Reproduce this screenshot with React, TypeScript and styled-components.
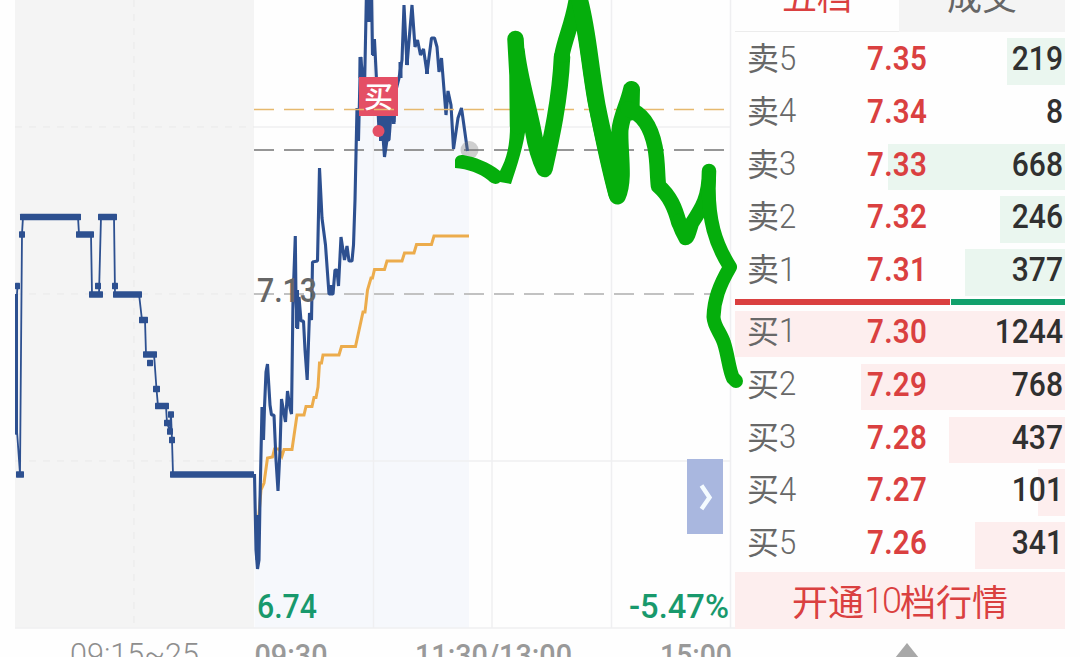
import React from 'react';
import styled, { createGlobalStyle } from 'styled-components';

const CJK = "'Noto Sans CJK SC', sans-serif";
const DIGITS = "Roboto, 'Noto Sans CJK SC', sans-serif";

const GlobalStyle = createGlobalStyle`
  * {
    box-sizing: border-box;
  }

  body {
    margin: 0;
    background: #fefefe;
    overflow: hidden;
  }
`;

const Screen = styled.main`
  position: relative;
  display: flex;
  width: 1080px;
  height: 657px;
  overflow: hidden;
  background: #fefefe;
`;

const ChartColumn = styled.section`
  flex: none;
  width: 735px;
  height: 657px;

  svg {
    display: block;
  }
`;

const OrderBook = styled.section`
  flex: none;
  display: flex;
  flex-direction: column;
  width: 330px;
  height: 657px;
`;

const Tabs = styled.div`
  flex: none;
  display: flex;
  height: 32px;
  margin-bottom: 3px;
`;

const Tab = styled.button<{ $active?: boolean }>`
  flex: none;
  display: flex;
  align-items: flex-end;
  justify-content: center;
  width: ${({ $active }) => ($active ? '164px' : '166px')};
  height: 32px;
  padding: 0 0 4px;
  border: none;
  border-bottom: 1px solid ${({ $active }) => ($active ? '#ececec' : '#f4f4f4')};
  background: ${({ $active }) => ($active ? 'transparent' : '#f4f4f4')};
  color: ${({ $active }) => ($active ? '#da4040' : '#666')};
  font-family: ${CJK};
  font-size: 35px;
  font-weight: 400;
  line-height: 64px;
`;

const Levels = styled.div`
  flex: none;
  display: flex;
  flex-direction: column;
`;

const LevelRow = styled.div`
  display: grid;
  height: 52.8px;
  padding: 3px 0;
`;

const DepthBar = styled.div<{ $side: Side }>`
  grid-area: 1 / 1;
  justify-self: end;
  height: 46.5px;
  background: ${({ $side }) => ($side === 'sell' ? '#eaf6ef' : '#fdeeee')};
`;

const LevelCells = styled.div`
  grid-area: 1 / 1;
  display: grid;
  grid-template-columns: 132px 80px 1fr;
  align-items: center;
  height: 42px;
  padding: 0 2px 0 12px;
  font-family: ${DIGITS};
  line-height: 40px;
`;

const LevelName = styled.span`
  display: flex;
  align-items: center;
  margin-top: -6px;
  color: #686868;
  font-family: ${CJK};
  font-size: 32px;
  font-weight: 400;
`;

const LevelIndex = styled.span`
  padding-top: 5px;
  font-family: ${DIGITS};
  font-size: 33px;
  font-weight: 350;
  transform: scaleX(0.94);
  transform-origin: left center;
`;

const Price = styled.span`
  margin-left: -12px;
  color: #da4040;
  font-size: 33px;
  font-weight: 600;
  letter-spacing: 0.3px;
  transform: scaleX(0.895);
  transform-origin: left center;
`;

const Volume = styled.span`
  color: #303030;
  font-size: 33px;
  font-weight: 500;
  text-align: right;
  transform: scaleX(0.91);
  transform-origin: right center;
`;

const RatioBar = styled.div`
  flex: none;
  display: grid;
  grid-template-columns: 215px 114px;
  gap: 1px;
  height: 6px;
  margin-bottom: 3px;
`;

const RatioPart = styled.div<{ $side: Side }>`
  background: ${({ $side }) => ($side === 'sell' ? '#12a06c' : '#da4040')};
`;

const UnlockButton = styled.button`
  flex: none;
  display: flex;
  align-items: center;
  justify-content: center;
  height: 57px;
  padding: 0;
  border: none;
  background: #fdeeee;
  color: #da4040;
  font-family: ${CJK};
  font-size: 36px;
  font-weight: 400;
  line-height: 57px;

  span {
    padding-top: 3px;
    font-family: ${DIGITS};
    font-weight: 350;
    letter-spacing: -2px;
  }
`;

const Footer = styled.div`
  display: flex;
  justify-content: center;
  padding: 14px 0 0 14px;
`;

const Doodle = styled.svg`
  position: absolute;
  inset: 0;
  pointer-events: none;
`;

type Side = 'sell' | 'buy';

interface Level {
  name: string;
  index: number;
  price: string;
  volume: number;
}

const SELL_LEVELS: Level[] = [
  { name: '卖', index: 5, price: '7.35', volume: 219 },
  { name: '卖', index: 4, price: '7.34', volume: 8 },
  { name: '卖', index: 3, price: '7.33', volume: 668 },
  { name: '卖', index: 2, price: '7.32', volume: 246 },
  { name: '卖', index: 1, price: '7.31', volume: 377 },
];

const BUY_LEVELS: Level[] = [
  { name: '买', index: 1, price: '7.30', volume: 1244 },
  { name: '买', index: 2, price: '7.29', volume: 768 },
  { name: '买', index: 3, price: '7.28', volume: 437 },
  { name: '买', index: 4, price: '7.27', volume: 101 },
  { name: '买', index: 5, price: '7.26', volume: 341 },
];

const MAX_VOLUME = 1244;

const AUCTION_LINE =
  '17.5,286 17,294 17,431 20,474 22,234 23,217 78,217 79,234 91,234 92,294 99,294 101,217 114,217 115,294 139,294 142,320 145,320 146,354 154,354 156.5,389 158,406 166,406 167,423 170,431 171,414 172,440 173,474 254,474';

// [x1, x2, y] of every auction price block
const AUCTION_BLOCKS = [
  [15, 20, 286], [15, 18, 431.5], [16, 24, 474.5], [19, 25, 234.5], [20, 81, 217],
  [76, 94, 234.5], [89, 103, 294.5], [95, 101, 286], [98, 117, 217], [112, 118, 286],
  [113, 142, 294.5], [139, 148, 320], [143, 157, 354.5], [147, 153, 363], [153, 160, 389],
  [155, 169, 406], [168, 174, 414.5], [164, 170, 423], [167, 173, 431.5], [169, 175, 440],
  [170, 254, 474.5],
];

const PRICE_LINE =
  '254.5,474 256,550 257.5,569 259,560 260,500 262,407 263.5,440 264.5,407 266,372 267.5,364 270,405 271.5,415 274,415 276,460 278,491 280,450 281.5,399 285.5,422 287.5,391 290,408 291.5,414 293,300 295.3,236 296,300 297.6,329 299,297 301,321 303.5,321 305,350 307.2,380 309.5,313 311.5,320 312.5,262 317.5,261 319.5,168 322,218 325.5,245 329,294 333,294 335,270 337,270 338.5,286 341,237 344.5,260 347,246 349,261 352,261 353.5,245 355,200 357,108 358.5,140 360.5,57 364.5,90 366.5,-10 368.8,21 371.5,-10 372.5,55 374.5,40 377,90 379,130 381,110 384.5,157 387,140 389,140 392,100 394,122 396,90 399,78 402,60 404,5 407,65 412,5 415,47 417.5,40 420.5,55 423.5,49 427,73 431.5,38 434.5,38 437,47 439,72 441.5,58 446,115 448,91 451,105 453.5,149 458,118 461.5,108 467.5,151';

const AVERAGE_LINE =
  '257,524 259,514 261,490 264,483 267.5,458 272.5,457 274.5,449 279,449 282,456 284,449.5 292,449.5 297,415 304,415 306,406.5 312,406.5 314,397.5 316,397.5 318,387 319.5,363 321.5,363 323,355 339,355 341.5,346.5 355.5,346.5 363,312 365,312 367.5,290 371,278 372.5,278 374.5,269.5 384.5,269.5 387,261 402,261 404.5,253 414,253 416.5,244.5 431.5,244.5 434,236 469,236';

const SketchStroke = () => (
  <Doodle width="1080" height="657" viewBox="0 0 1080 657" fill="none" stroke="#05ae0c" strokeLinecap="round" strokeLinejoin="round">
    <path
      d="M455 160 C456 156 459 155 463 155 C475 157 489 162 500 171 C507 158 510 145 510 125 L526 125 C524 145 517 166 511 184 L500 182 C496 186 491 183 488 180 C479 173 468 169 455 168 Z"
      fill="#05ae0c"
      stroke="none"
    />
    <path strokeWidth="16.500" d="M518 126 L517.500 75 L515.500 39 M516.500 50 C519 75 528 105 533 130 C536 148 540 160 544.500 169 C551 140 560 100 562 57" />
    <path strokeWidth="15.500" d="M562 55 C565 38 574 20 577 -5 C586 25 588 60 595 100 C601 130 608 165 616 194" />
    <path strokeWidth="17" d="M579 -2 C588 30 589 60 597 105 C603 135 610 165 617.500 196 C625 180 619 150 620 130 C621 117 628 105 631.500 89.500 L631 112" />
    <path strokeWidth="15.500" d="M628 109 C642 113 651 127 655 147 C658 163 657 174 658.500 186 C670 196 675 208 679 223" />
    <path strokeWidth="14.500" d="M679 221 C680 230 684 234 685.500 238 C688 238 690 229 692 223 C702 208 709 197 709 171" />
    <path strokeWidth="14" d="M709 178 C707 220 716 245 730 267 C719 286 714 300 713.500 317 C714 327 721 333 724 343 C728 355 729 370 733 378 L736 381" />
  </Doodle>
);

const TimeShareChart = () => (
  <svg width="735" height="657" viewBox="0 0 735 657" fontFamily={DIGITS}>
    <rect x="15" y="0" width="239" height="628" fill="#f4f4f4" />
    <g fill="none" stroke="#e9e9e9" strokeDasharray="7 7">
      <path d="M134 0V628" />
      <path d="M15 127H254 M15 294H254 M15 461H254" />
    </g>
    <polygon points={`${PRICE_LINE} 469,151 469,628 254.5,628`} fill="#f6f8fc" />
    <g fill="none" stroke="#efeff1" strokeWidth="1.5">
      <path d="M373.500 0V628 M492 0V628 M611.500 0V628 M730.500 0V628" />
      <path d="M254 127H731 M254 461H731 M15 628H735" />
    </g>

    <path d="M254 150H724" stroke="#969696" strokeWidth="2" strokeDasharray="20 10" />
    <path d="M254 294H724" stroke="#c2c2c2" strokeWidth="1.800" strokeDasharray="20 10" />

    <polyline points={AVERAGE_LINE} fill="none" stroke="#ecac4c" strokeWidth="3" />
    <polyline points={AUCTION_LINE} fill="none" stroke="#2d5090" strokeWidth="1.8" />
    <path d="M16.500 294V434" stroke="#2d5090" strokeWidth="3" />
    {AUCTION_BLOCKS.map(([x1, x2, y]) => (
      <rect key={`${x1}-${y}`} x={x1} y={y - 3.2} width={x2 - x1} height="6.4" rx="0.6" fill="#2d5090" />
    ))}
    <polyline points={PRICE_LINE} fill="none" stroke="#2d5090" strokeWidth="3.1" strokeLinejoin="bevel" />
    {/* stretches where neighbouring ticks merge */}
    <path
      d="M367 0V22 M370.500 0V22 M374 39V56 M360.500 57V78 M358 108V141 M381 116V141 M384 116V145 M388 116V141 M393.500 110V124 M400.500 62V78 M407 48V65 M427 60V74 M257.500 515V560 M297 290V328 M331 285V294"
      stroke="#2d5090"
      strokeWidth="4"
    />
    <circle cx="469.5" cy="150" r="9" fill="#777" fillOpacity="0.35" />

    <circle cx="378.500" cy="131" r="6" fill="#e44f65" />
    <rect x="359" y="77" width="39" height="39" fill="#e44f65" />
    <path d="M254 109.500H724" stroke="#e6b96e" strokeWidth="1.500" strokeDasharray="20 10" />
    <text x="378.500" y="107.500" textAnchor="middle" fontFamily={CJK} fontSize="29" fontWeight="500" fill="#fff">
      买
    </text>

    <g fontSize="33" fontWeight="500">
      <text x="257" y="302" fill="#666" textLength="60" lengthAdjust="spacingAndGlyphs">7.13</text>
      <text x="257" y="618" fill="#18996c" textLength="60" lengthAdjust="spacingAndGlyphs">6.74</text>
      <text x="629" y="618" fill="#18996c" textLength="100" lengthAdjust="spacingAndGlyphs">-5.47%</text>
    </g>

    <rect x="687" y="459" width="36" height="75" fill="#a9b7df" />
    <path d="M701.500 485.500L709.500 497.500L701.500 509" fill="none" stroke="#f4fbff" strokeWidth="4.400" />

    <g fontSize="32" fill="#999">
      <text x="70" y="665" fontWeight="300" fill="#8e8e8e" textLength="129" lengthAdjust="spacingAndGlyphs">09:15~25</text>
      <text x="254.500" y="666" fontWeight="500" textLength="73" lengthAdjust="spacingAndGlyphs">09:30</text>
      <text x="415" y="666" fontWeight="500" textLength="157" lengthAdjust="spacingAndGlyphs">11:30/13:00</text>
      <text x="660" y="666" fontWeight="500" textLength="72" lengthAdjust="spacingAndGlyphs">15:00</text>
    </g>
  </svg>
);

const LevelList: React.FC<{ side: Side; levels: Level[] }> = ({ side, levels }) => (
  <Levels>
    {levels.map(level => (
      <LevelRow key={level.index}>
        {level.volume > 10 && (
          <DepthBar $side={side} style={{ width: `${(level.volume / MAX_VOLUME) * 100}%` }} />
        )}
        <LevelCells>
          <LevelName>
            {level.name}
            <LevelIndex>{level.index}</LevelIndex>
          </LevelName>
          <Price>{level.price}</Price>
          <Volume>{level.volume}</Volume>
        </LevelCells>
      </LevelRow>
    ))}
  </Levels>
);

const App: React.FC = () => (
  <>
    <GlobalStyle />
    <Screen>
      <ChartColumn>
        <TimeShareChart />
      </ChartColumn>
      <OrderBook>
        <Tabs>
          <Tab type="button" $active>五档</Tab>
          <Tab type="button">成交</Tab>
        </Tabs>
        <LevelList side="sell" levels={SELL_LEVELS} />
        <RatioBar>
          <RatioPart $side="buy" />
          <RatioPart $side="sell" />
        </RatioBar>
        <LevelList side="buy" levels={BUY_LEVELS} />
        <UnlockButton type="button">
          开通<span>10</span>档行情
        </UnlockButton>
        <Footer>
          <svg width="24" height="15" viewBox="0 0 24 15" aria-hidden="true">
            <path d="M12 0L24 15H0Z" fill="#a8a8a8" />
          </svg>
        </Footer>
      </OrderBook>
      <SketchStroke />
    </Screen>
  </>
);

export default App;
